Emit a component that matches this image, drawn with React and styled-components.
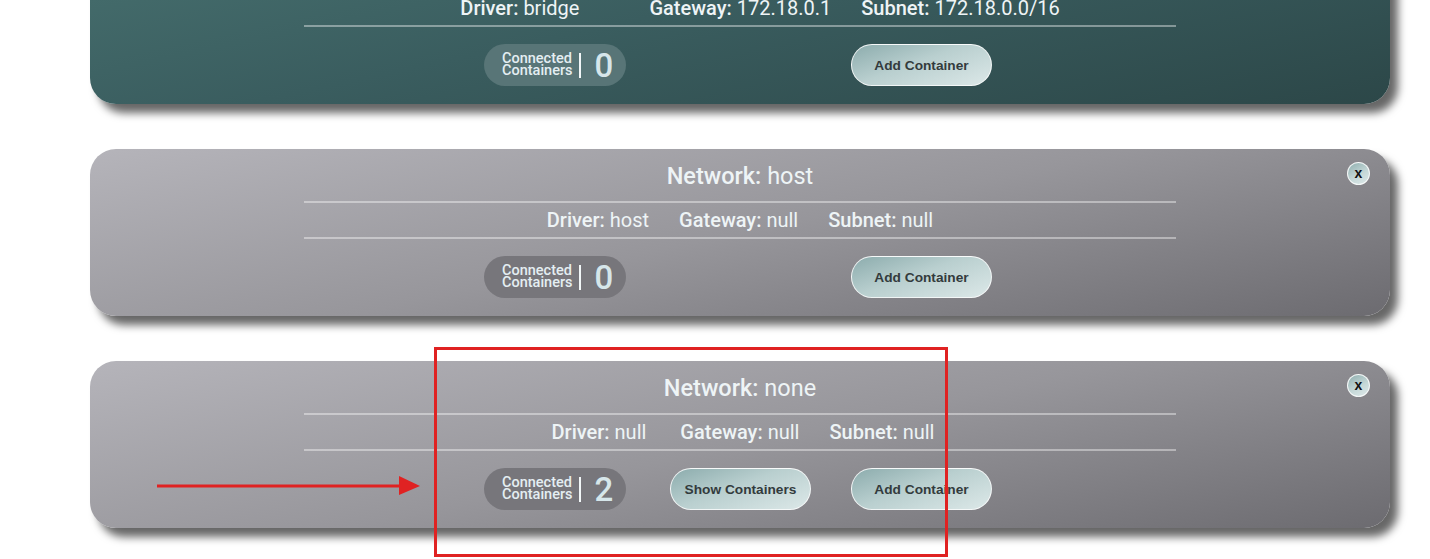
import React from "react";
import styled, { createGlobalStyle } from "styled-components";

const networks = [
    {
        id: 1,
        variant: "teal",
        name: "bridge",
        driver: "bridge",
        gateway: "172.18.0.1",
        subnet: "172.18.0.0/16",
        count: 0,
        showList: false,
        driverPad: "0 40px",
    },
    {
        id: 2,
        variant: "gray",
        name: "host",
        driver: "host",
        gateway: "null",
        subnet: "null",
        count: 0,
        showList: false,
        driverPad: "0",
    },
    {
        id: 3,
        variant: "gray",
        name: "none",
        driver: "null",
        gateway: "null",
        subnet: "null",
        count: 2,
        showList: true,
        driverPad: "0 4px 0 6px",
    },
];

const palette = {
    teal: {
        bg: "linear-gradient(168deg, #47706f 0%, #3a5d5f 45%, #2c4748 100%)",
        pill: "#587577",
    },
    gray: {
        bg: "linear-gradient(168deg, #b5b4ba 0%, #97969b 50%, #6c6b70 100%)",
        pill: "#77767b",
    },
};

export default function App() {
    return (
        <Page>
            <GlobalStyle />
            <CardStack>
                {networks.map((net) => (
                    <Card key={net.id} $variant={net.variant}>
                        <CloseButton>x</CloseButton>
                        <Title>
                            <Strong>Network:</Strong> {net.name}
                        </Title>
                        <Divider />
                        <InfoRow>
                            <InfoItem $pad={net.driverPad}>
                                <Strong>Driver:</Strong> {net.driver}
                            </InfoItem>
                            <InfoItem>
                                <Strong>Gateway:</Strong> {net.gateway}
                            </InfoItem>
                            <InfoItem>
                                <Strong>Subnet:</Strong> {net.subnet}
                            </InfoItem>
                        </InfoRow>
                        <Divider />
                        <ActionRow>
                            <CountPill $variant={net.variant}>
                                <PillLabel>
                                    Connected
                                    <br />
                                    Containers
                                </PillLabel>
                                <PillBar />
                                <PillCount>{net.count}</PillCount>
                            </CountPill>
                            {net.showList && (
                                <ActionButton $col={2}>Show Containers</ActionButton>
                            )}
                            <ActionButton $col={3}>Add Container</ActionButton>
                        </ActionRow>
                    </Card>
                ))}
            </CardStack>

            <HighlightBox />
            <Arrow width="270" height="24" viewBox="0 0 270 24">
                <line x1="2" y1="11" x2="248" y2="11" stroke="#e02222" strokeWidth="3" />
                <polygon points="244,1 265,11 244,20" fill="#e02222" />
            </Arrow>
        </Page>
    );
}

const GlobalStyle = createGlobalStyle`
    html, body {
        margin: 0;
        padding: 0;
        background: #ffffff;
        overflow: hidden;
    }
    body {
        font-family: Roboto, "Noto Sans", sans-serif;
    }
`;

const Page = styled.div`
    position: relative;
    height: 559px;
    overflow: hidden;
    padding: 0 40px 0 90px;
`;

const CardStack = styled.div`
    display: flex;
    flex-direction: column;
    gap: 45px;
    margin-top: -63px;
`;

const Card = styled.section`
    position: relative;
    width: 1300px;
    height: 167px;
    box-sizing: border-box;
    border-radius: 26px;
    background: ${(p) => palette[p.$variant].bg};
    box-shadow: 8px 9px 9px rgba(0, 0, 0, 0.6);
    display: flex;
    flex-direction: column;
    color: #eef4f6;
`;

const CloseButton = styled.button`
    position: absolute;
    top: 13px;
    right: 20px;
    width: 23px;
    height: 23px;
    padding: 0 0 2px;
    border-radius: 50%;
    border: 1px solid rgba(255, 255, 255, 0.85);
    background: linear-gradient(150deg, #8eaeae 0%, #c4d7d7 55%, #dfeaea 100%);
    font-family: "Liberation Sans", Arial, sans-serif;
    font-weight: 700;
    font-size: 14px;
    line-height: 1;
    color: #111111;
    cursor: pointer;
`;

const Title = styled.h2`
    margin: 0;
    height: 52px;
    line-height: 54px;
    text-align: center;
    font-size: 23.5px;
    font-weight: 400;
`;

const Strong = styled.span`
    font-weight: 500;
`;

const Divider = styled.hr`
    width: 872px;
    height: 2px;
    margin: 0 auto;
    border: none;
    background: rgba(255, 255, 255, 0.4);
`;

const InfoRow = styled.div`
    height: 34px;
    display: flex;
    align-items: center;
    justify-content: center;
    gap: 30px;
    font-size: 20px;
`;

const InfoItem = styled.span`
    padding: ${(p) => p.$pad || "0"};
    white-space: nowrap;
`;

const ActionRow = styled.div`
    margin-top: 17px;
    display: grid;
    grid-template-columns: 186px 181px 141px;
    justify-content: center;
    padding-right: 4px;
    align-items: center;
`;

const CountPill = styled.div`
    grid-column: 1;
    width: 142px;
    height: 42px;
    box-sizing: border-box;
    border-radius: 21px;
    background: ${(p) => palette[p.$variant].pill};
    display: flex;
    align-items: center;
    padding-left: 18px;
`;

const PillLabel = styled.span`
    font-size: 14.5px;
    font-weight: 500;
    line-height: 12px;
    color: #e4eef2;
`;

const PillBar = styled.span`
    width: 2px;
    height: 25px;
    margin: 0 14px 0 6px;
    background: #f2f7f8;
`;

const PillCount = styled.span`
    font-size: 33px;
    font-weight: 500;
    color: #d6e6ea;
    line-height: 1;
`;

const ActionButton = styled.button`
    grid-column: ${(p) => p.$col};
    width: 141px;
    height: 42px;
    border-radius: 21px;
    border: 1px solid rgba(255, 255, 255, 0.85);
    background: linear-gradient(160deg, #8cacad 0%, #b9cfcf 45%, #dce8e8 100%);
    font-family: "Liberation Sans", Arial, sans-serif;
    font-weight: 700;
    font-size: 13.7px;
    color: #333b3d;
    cursor: pointer;
    padding: 0;
`;

const HighlightBox = styled.div`
    position: absolute;
    left: 434px;
    top: 347px;
    width: 514px;
    height: 210px;
    box-sizing: border-box;
    border: 3px solid #e02222;
    pointer-events: none;
`;

const Arrow = styled.svg`
    position: absolute;
    left: 155px;
    top: 475px;
    pointer-events: none;
`;
